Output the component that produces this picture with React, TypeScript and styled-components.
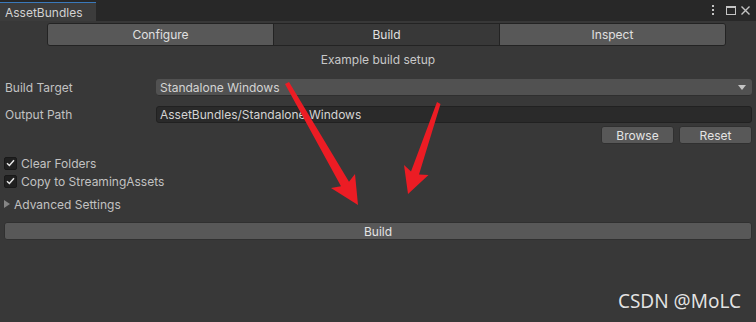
import styled, { createGlobalStyle } from 'styled-components';

const GlobalStyle = createGlobalStyle`
  html, body {
    margin: 0;
    padding: 0;
    background: #383838;
  }
  body {
    font-family: Inter, 'Noto Sans', sans-serif;
    font-size: 12px;
    color: #c2c2c2;
  }
`;

/* whole editor window */
const Window = styled.div`
  position: relative;
  width: 756px;
  height: 322px;
  background: #383838;
  overflow: hidden;
`;

/* title strip with the dock tab */
const TitleBar = styled.div`
  display: flex;
  align-items: flex-end;
  justify-content: space-between;
  height: 21px;
  background: #282828;
`;

const DockTab = styled.div`
  display: flex;
  align-items: center;
  width: 91px;
  height: 18px;
  padding-left: 5px;
  background: #3c3c3c;
  border-top: 1px solid #3a79bb;
  color: #d2d2d2;
  font-size: 12px;
`;

const WindowIcons = styled.div`
  display: flex;
  align-items: center;
  gap: 5px;
  align-self: flex-start;
  padding: 5px 6px 0 0;
`;

const Body = styled.div`
  display: flex;
  flex-direction: column;
  padding: 0 4px;
`;

/* Configure / Build / Inspect */
const Toolbar = styled.div`
  display: flex;
  margin: 2px 0 0 43px;
  width: 679px;
  height: 23px;
  border: 1px solid #232323;
  border-radius: 3px;
  box-sizing: border-box;
  overflow: hidden;
`;

const ToolbarTab = styled.div<{ $active?: boolean }>`
  flex: 1;
  display: flex;
  align-items: center;
  justify-content: center;
  background: ${(p) => (p.$active ? '#383838' : '#585858')};
  border-left: ${(p) => (p.$active ? '1px solid #232323' : 'none')};
  border-right: ${(p) => (p.$active ? '1px solid #232323' : 'none')};
  color: #e0e0e0;
  font-size: 12px;
`;

const Subtitle = styled.div`
  height: 16px;
  margin-top: 6px;
  line-height: 16px;
  text-align: center;
  color: #c8c8c8;
`;

const FieldRow = styled.div<{ $top: number }>`
  display: flex;
  align-items: center;
  height: 17px;
  margin-top: ${(p) => p.$top}px;
`;

const Label = styled.div`
  width: 151px;
  padding-left: 1px;
  color: #c2c2c2;
`;

const Dropdown = styled.div`
  flex: 1;
  display: flex;
  align-items: center;
  justify-content: space-between;
  height: 17px;
  padding: 0 6px 0 4px;
  background: #515151;
  border-radius: 3px;
  box-shadow: inset 0 -1px 0 #2f2f2f;
  color: #d4d4d4;
`;

const Caret = styled.span`
  width: 0;
  height: 0;
  border-left: 4px solid transparent;
  border-right: 4px solid transparent;
  border-top: 5px solid #c4c4c4;
`;

const TextField = styled.div`
  flex: 1;
  display: flex;
  align-items: center;
  height: 17px;
  box-sizing: border-box;
  padding-left: 3px;
  background: #2a2a2a;
  border: 1px solid #212121;
  border-radius: 3px;
  color: #d4d4d4;
`;

const ButtonRow = styled.div`
  display: flex;
  justify-content: flex-end;
  gap: 5px;
  margin-top: 3px;
`;

const Button = styled.div<{ $width?: number }>`
  display: flex;
  align-items: center;
  justify-content: center;
  width: ${(p) => (p.$width ? `${p.$width}px` : 'auto')};
  height: 18px;
  box-sizing: border-box;
  background: #585858;
  border: 1px solid #303030;
  border-radius: 3px;
  color: #e4e4e4;
`;

const CheckRow = styled.div<{ $top: number }>`
  display: flex;
  align-items: center;
  gap: 4px;
  height: 18px;
  margin-top: ${(p) => p.$top}px;
`;

const CheckBox = styled.span`
  display: flex;
  align-items: center;
  justify-content: center;
  width: 13px;
  height: 13px;
  box-sizing: border-box;
  background: #202020;
  border: 1px solid #191919;
  border-radius: 2px;
`;

const Foldout = styled.div`
  display: flex;
  align-items: center;
  gap: 4px;
  height: 18px;
  margin-top: 5px;
`;

const FoldArrow = styled.span`
  width: 0;
  height: 0;
  border-top: 4px solid transparent;
  border-bottom: 4px solid transparent;
  border-left: 6px solid #858585;
`;

const BuildButton = styled(Button)`
  margin-top: 9px;
`;

const ArrowLayer = styled.svg`
  position: absolute;
  left: 0;
  top: 0;
  pointer-events: none;
`;

const Watermark = styled.div`
  position: absolute;
  right: 15px;
  bottom: 8px;
  font-family: 'Noto Sans', 'DejaVu Sans', sans-serif;
  font-size: 19px;
  color: #e2e2e2;
  text-shadow: 0 0 1px rgba(0, 0, 0, 0.4);
`;

function WindowButtons() {
  return (
    <WindowIcons>
      <svg width="4" height="10" viewBox="0 0 4 10">
        <rect x="1" y="0" width="2" height="2" fill="#c4c4c4" />
        <rect x="1" y="4" width="2" height="2" fill="#c4c4c4" />
        <rect x="1" y="8" width="2" height="2" fill="#c4c4c4" />
      </svg>
      <svg width="10" height="9" viewBox="0 0 10 9" style={{ marginLeft: 6 }}>
        <rect x="0.5" y="0.5" width="9" height="8" fill="none" stroke="#c4c4c4" />
        <rect x="0" y="0" width="10" height="2" fill="#c4c4c4" />
      </svg>
      <svg width="9" height="9" viewBox="0 0 9 9">
        <path d="M0.5 0.5 L8.5 8.5 M8.5 0.5 L0.5 8.5" stroke="#c4c4c4" strokeWidth="1.4" />
      </svg>
    </WindowIcons>
  );
}

function Check() {
  return (
    <CheckBox>
      <svg width="9" height="8" viewBox="0 0 9 8">
        <path d="M1 4.2 L3.4 6.5 L8 1.2" fill="none" stroke="#e6e6e6" strokeWidth="1.5" />
      </svg>
    </CheckBox>
  );
}

export default function App() {
  return (
    <>
      <GlobalStyle />
      <Window>
        <TitleBar>
          <DockTab>AssetBundles</DockTab>
          <WindowButtons />
        </TitleBar>
        <Body>
          <Toolbar>
            <ToolbarTab>Configure</ToolbarTab>
            <ToolbarTab $active>Build</ToolbarTab>
            <ToolbarTab>Inspect</ToolbarTab>
          </Toolbar>
          <Subtitle>Example build setup</Subtitle>
          <FieldRow $top={11}>
            <Label>Build Target</Label>
            <Dropdown>
              <span>Standalone Windows</span>
              <Caret />
            </Dropdown>
          </FieldRow>
          <FieldRow $top={10}>
            <Label>Output Path</Label>
            <TextField>AssetBundles/Standalone Windows</TextField>
          </FieldRow>
          <ButtonRow>
            <Button $width={73}>Browse</Button>
            <Button $width={73}>Reset</Button>
          </ButtonRow>
          <CheckRow $top={10}>
            <Check />
            <span>Clear Folders</span>
          </CheckRow>
          <CheckRow $top={0}>
            <Check />
            <span>Copy to StreamingAssets</span>
          </CheckRow>
          <Foldout>
            <FoldArrow />
            <span>Advanced Settings</span>
          </Foldout>
          <BuildButton>Build</BuildButton>
        </Body>

        {/* red annotation arrows drawn over the window */}
        <ArrowLayer width="756" height="322" viewBox="0 0 756 322">
          <polygon
            points="285,84 289,82 349,181.7 355,174 358,205 331,188 341,186.3"
            fill="#ec1c24"
          />
          <polygon
            points="437,102 440.5,104 419,174.5 428.5,175 408,194 404,165 411,171.5"
            fill="#ec1c24"
          />
        </ArrowLayer>
        <Watermark>CSDN @MoLC</Watermark>
      </Window>
    </>
  );
}
